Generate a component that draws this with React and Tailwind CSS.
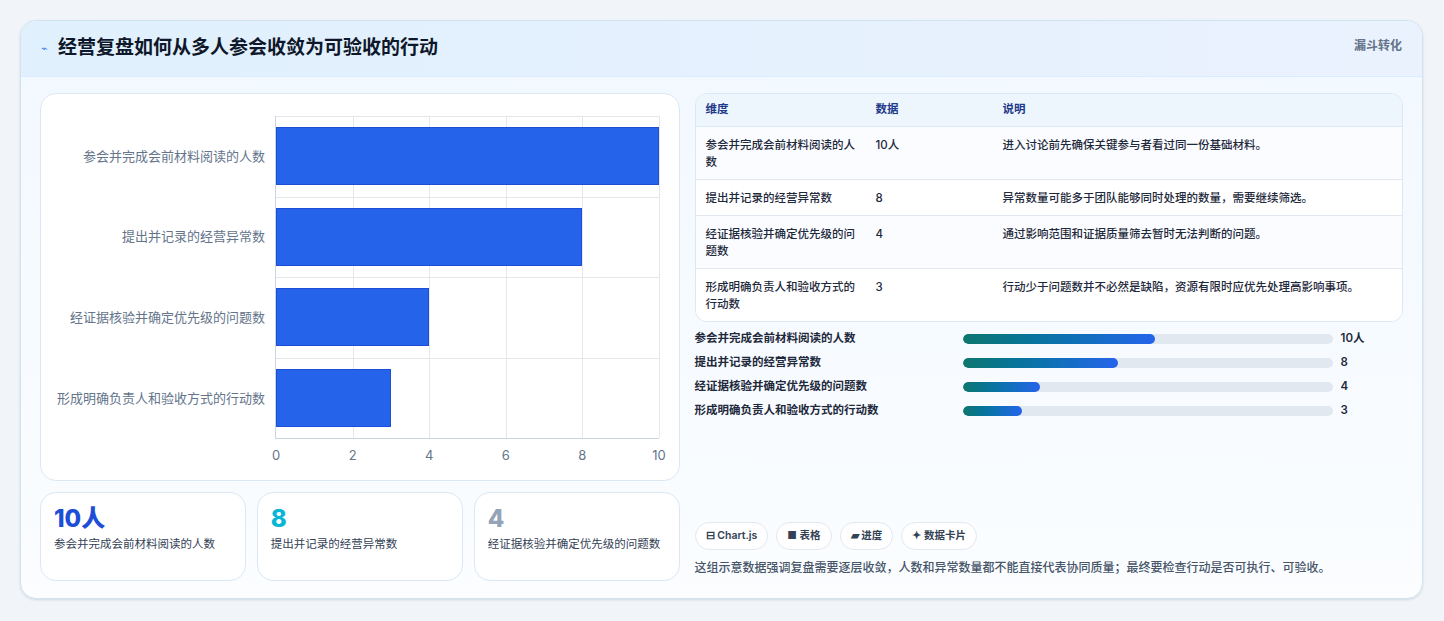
import React from 'react';

const rows = [
  { label: '参会并完成会前材料阅读的人数', value: 10, text: '10人', desc: '进入讨论前先确保关键参与者看过同一份基础材料。', pct: 52 },
  { label: '提出并记录的经营异常数', value: 8, text: '8', desc: '异常数量可能多于团队能够同时处理的数量，需要继续筛选。', pct: 42 },
  { label: '经证据核验并确定优先级的问题数', value: 4, text: '4', desc: '通过影响范围和证据质量筛去暂时无法判断的问题。', pct: 21 },
  { label: '形成明确负责人和验收方式的行动数', value: 3, text: '3', desc: '行动少于问题数并不必然是缺陷，资源有限时应优先处理高影响事项。', pct: 16 },
];

function Chart() {
  return (
    <div className="h-[388px] rounded-2xl border border-[#dbe7f3] bg-white relative">
      {/* labels */}
      <div className="absolute left-0 top-[22px] w-[224px] h-[323px] flex flex-col">
        {rows.map(r => (
          <div key={r.label} className="flex-1 flex items-center justify-end text-[13px] text-[#64748b]">{r.label}</div>
        ))}
      </div>
      <div className="absolute left-[234px] top-[22px] w-[384px] h-[323px] border-l border-b border-[#cbd5e1]">
        {[1, 2, 3, 4, 5].map(i => (
          <div key={i} className="absolute top-0 bottom-0 border-l border-[#e5e7eb]" style={{ left: `${i * 20}%` }} />
        ))}
        {[1, 2, 3].map(i => (
          <div key={i} className="absolute left-0 right-0 border-t border-[#e5e7eb]" style={{ top: `${i * 25}%` }} />
        ))}
        <div className="absolute left-0 right-0 top-0 border-t border-[#e5e7eb]" />
        <div className="relative h-full flex flex-col">
          {rows.map(r => (
            <div key={r.label} className="flex-1 flex items-center">
              <div className="h-[58px] bg-[#2563eb] border border-[#1d4ed8]" style={{ width: `${r.value * 10}%` }} />
            </div>
          ))}
        </div>
        <div className="absolute left-0 right-0 top-full">
          {[0, 2, 4, 6, 8, 10].map((t, i) => (
            <span key={t} className="absolute top-[8px] -translate-x-1/2 text-[13px] text-[#64748b]" style={{ left: `${i * 20}%` }}>{t}</span>
          ))}
        </div>
      </div>
    </div>
  );
}

export default function App() {
  return (
    <div className="w-[1444px] h-[621px] bg-[#f1f5f9] pt-[20px] px-[20px]" style={{ fontFamily: 'Inter, "Noto Sans CJK SC", sans-serif' }}>
      <div className="w-[1403px] h-[579px] rounded-2xl border border-[#cfe3f1] bg-gradient-to-b from-[#f1f8ff] to-[#fbfdff] overflow-hidden shadow-sm">
        <div className="h-[56px] flex items-center justify-between px-[20px] bg-gradient-to-r from-[#e0f0fd] to-[#eaf2fe] border-b border-[#dbeafe]">
          <div className="flex items-center gap-[10px]">
            <span className="text-[#3b82f6] text-[11px]">⌁</span>
            <h1 className="text-[19px] font-bold text-[#0f172a]">经营复盘如何从多人参会收敛为可验收的行动</h1>
          </div>
          <span className="text-[12px] font-semibold text-[#64748b] self-start mt-[16px]">漏斗转化</span>
        </div>
        <div className="flex gap-[15px] px-[19px] pt-[16px]">
          <div className="w-[641px] flex flex-col gap-[11px]">
            <Chart />
            <div className="grid grid-cols-3 gap-[11px]">
              {[
                { v: '10人', c: 'text-[#1d4ed8]', t: '参会并完成会前材料阅读的人数' },
                { v: '8', c: 'text-[#06b6d4]', t: '提出并记录的经营异常数' },
                { v: '4', c: 'text-[#94a3b8]', t: '经证据核验并确定优先级的问题数' },
              ].map(k => (
                <div key={k.t} className="h-[89px] rounded-2xl border border-[#dbe7f3] bg-white px-[13px] pt-[10px]">
                  <div className={`text-[24px] font-extrabold leading-[32px] ${k.c}`}>{k.v}</div>
                  <div className="text-[11.5px] text-[#334155] leading-[15px] mt-[2px]">{k.t}</div>
                </div>
              ))}
            </div>
          </div>
          <div className="w-[710px] flex flex-col">
            <div className="rounded-xl border border-[#dbe7f3] bg-white overflow-hidden text-[11.5px]">
              <div className="grid grid-cols-[170px_127px_1fr] h-[33px] items-center px-[10px] bg-[#eef6fd] border-b border-[#dbe7f3] font-semibold text-[#1e3a8a]">
                <span>维度</span><span>数据</span><span>说明</span>
              </div>
              {rows.map((r, i) => (
                <div key={r.label} className={`grid grid-cols-[170px_127px_1fr] px-[10px] pt-[10px] pb-[8px] text-[#1e293b] ${i < 3 ? 'border-b border-[#e2e8f0]' : ''} ${i % 2 ? 'bg-white' : 'bg-[#fafcff]'}`}>
                  <span className="leading-[17px] pr-[14px] font-medium">{r.label}</span>
                  <span className="leading-[17px] font-medium">{r.text}</span>
                  <span className="leading-[17px] font-medium">{r.desc}</span>
                </div>
              ))}
            </div>
            <div className="flex flex-col gap-[5px] mt-[7px]">
              {rows.map(r => (
                <div key={r.label} className="flex items-center h-[19px] text-[11.5px] font-semibold text-[#1e293b]">
                  <span className="w-[268px]">{r.label}</span>
                  <div className="w-[370px] h-[10px] rounded-full bg-[#e2e8f0] overflow-hidden">
                    <div className="h-full rounded-full bg-gradient-to-r from-[#0f766e] to-[#2563eb]" style={{ width: `${r.pct}%` }} />
                  </div>
                  <span className="ml-[8px]">{r.text}</span>
                </div>
              ))}
            </div>
            <div className="flex gap-[8px] mt-[102px]">
              {['⊟ Chart.js', '■ 表格', '▰ 进度', '✦ 数据卡片'].map(p => (
                <span key={p} className="h-[28px] px-[10px] rounded-full border border-[#e2e8f0] bg-white flex items-center text-[10.5px] font-semibold text-[#334155]">{p}</span>
              ))}
            </div>
            <p className="mt-[9px] text-[12px] text-[#475569] font-medium">这组示意数据强调复盘需要逐层收敛，人数和异常数量都不能直接代表协同质量；最终要检查行动是否可执行、可验收。</p>
          </div>
        </div>
      </div>
    </div>
  );
}
